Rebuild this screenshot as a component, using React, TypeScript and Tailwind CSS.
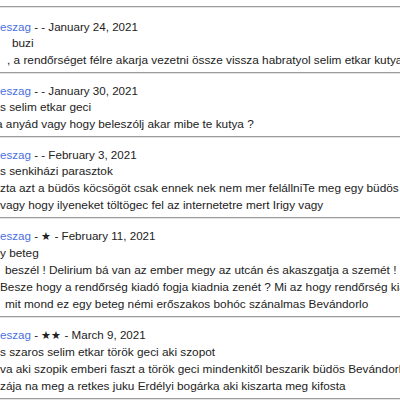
import React from "react";

type Entry = {
  stars: string;
  date: string;
  lines: { text: string; cls: string }[];
};

const entries: Entry[] = [
  {
    stars: "",
    date: "January 24, 2021",
    lines: [
      { text: "buzi", cls: "pl-[12px]" },
      { text: ", a rendőrséget félre akarja vezetni össze vissza habratyol selim etkar kutya", cls: "pl-[7px]" },
    ],
  },
  {
    stars: "",
    date: "January 30, 2021",
    lines: [
      { text: "s selim etkar geci", cls: "pl-0" },
      { text: "a anyád vagy hogy beleszólj akar mibe te kutya ?", cls: "-ml-[4px]" },
    ],
  },
  {
    stars: "",
    date: "February 3, 2021",
    lines: [
      { text: "s senkiházi parasztok", cls: "pl-0" },
      { text: "zta azt a büdös köcsögöt csak ennek nek nem mer felállniTe meg egy büdös", cls: "pl-0" },
      { text: "vagy hogy ilyeneket töltögec fel az internetetre mert Irigy vagy", cls: "pl-0" },
    ],
  },
  {
    stars: "★",
    date: "February 11, 2021",
    lines: [
      { text: "y beteg", cls: "pl-0" },
      { text: "beszél ! Delirium bá van az ember megy az utcán és akaszgatja a szemét !", cls: "pl-[5px]" },
      { text: "Besze hogy a rendőrség kiadó fogja kiadnia zenét ? Mi az hogy rendőrség kiadó", cls: "pl-0" },
      { text: "mit mond ez egy beteg némi erőszakos bohóc szánalmas Bevándorlo", cls: "pl-[5px]" },
    ],
  },
  {
    stars: "★★",
    date: "March 9, 2021",
    lines: [
      { text: "s szaros selim etkar török geci aki szopot", cls: "pl-0" },
      { text: "va aki szopik emberi faszt a török geci mindenkitől beszarik büdös Bevándorlo", cls: "pl-0" },
      { text: "zája na meg a retkes juku Erdélyi bogárka aki kiszarta meg kifosta", cls: "pl-0" },
    ],
  },
];

export default function App() {
  return (
    <div
      className="w-[400px] h-[400px] overflow-hidden bg-white pt-[6px] text-[11.8px] leading-[17px] text-[#222]"
      style={{ fontFamily: '"Liberation Sans", Arial, sans-serif' }}
    >
      {entries.map((e, i) => (
        <div key={i}>
          <div className="h-[2px] border-t border-t-[#9c9c9c] border-b border-b-[#e4e4e4]" />
          <div className={`${i === 0 ? "pt-[10px]" : "pt-[8px]"} pb-[3px] whitespace-nowrap`}>
            <div className="text-[11.6px]">
              <span className="text-[#4a6fe0]">eszag</span>
              <span>
                {" "}- {e.stars ? <span className="text-[11px]">{e.stars}</span> : null}
                {e.stars ? " " : ""}- {e.date}
              </span>
            </div>
            {e.lines.map((l, j) => (
              <div key={j} className={l.cls}>
                {l.text}
              </div>
            ))}
          </div>
        </div>
      ))}
      <div className="h-[2px] border-t border-t-[#9c9c9c] border-b border-b-[#e4e4e4]" />
    </div>
  );
}
